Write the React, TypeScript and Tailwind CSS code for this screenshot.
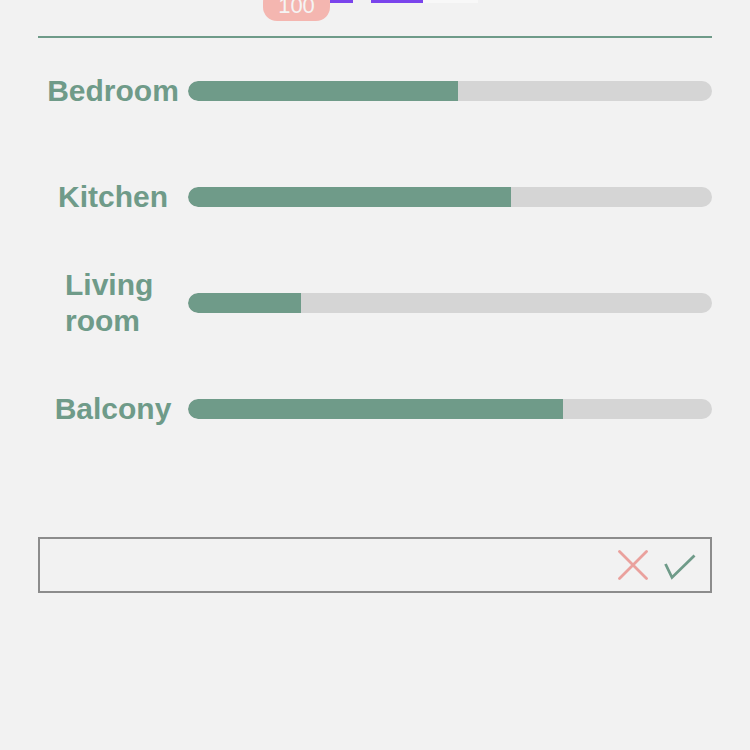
import React from "react";

const rooms = [
  { name: "Bedroom", pct: 270 / 524, labelClass: "" },
  { name: "Kitchen", pct: 323 / 524, labelClass: "" },
  { name: "Living room", pct: 113 / 524, labelClass: "w-[96px]" },
  { name: "Balcony", pct: 375 / 524, labelClass: "" },
];

export default function App() {
  return (
    <div
      className="w-[750px] h-[750px] bg-[#f2f2f2] overflow-hidden px-[38px]"
      style={{ fontFamily: '"Liberation Sans", Arial, sans-serif' }}
    >
      <div className="relative h-[36px]">
        <div className="absolute left-[225px] top-[-12px] w-[67px] h-[33px] rounded-[14px] bg-[#f4b6b0] flex items-center justify-center pt-[3px]">
          <span className="text-[22px] leading-none text-[#f4f4f4] font-light">100</span>
        </div>
        <div className="absolute left-[292px] top-0 w-[23px] h-[3px] bg-[#7a44ec]" />
        <div className="absolute left-[333px] top-0 w-[52px] h-[3px] bg-[#7a44ec]" />
        <div className="absolute left-[385px] top-0 w-[55px] h-[3px] bg-[#f8f8f8]" />
      </div>
      <div className="h-[2px] bg-[#6f9b89]" />
      <div className="flex flex-col">
        {rooms.map((r) => (
          <div key={r.name} className="h-[106px] flex items-center">
            <div className="w-[150px] shrink-0 flex justify-center">
              <div
                className={`text-[30px] leading-[36px] font-bold text-[#6f9b89] text-left ${r.labelClass}`}
              >
                {r.name}
              </div>
            </div>
            <div className="flex-1 h-[20px] rounded-full bg-[#d5d5d5] overflow-hidden">
              <div
                className="h-full bg-[#6f9b89] rounded-l-full"
                style={{ width: `${r.pct * 100}%` }}
              />
            </div>
          </div>
        ))}
      </div>
      <div className="mt-[75px] h-[56px] border-2 border-[#8c8c8c] flex items-center justify-end pr-[14px] gap-[16px]">
        <svg width="30" height="30" viewBox="0 0 30 30" fill="none">
          <path d="M1.5 1.5 L28.5 28.5 M28.5 1.5 L1.5 28.5" stroke="#eaa19d" strokeWidth="2.8" strokeLinecap="round" />
        </svg>
        <svg width="32" height="26" viewBox="0 0 32 26" fill="none" className="mt-[4px]">
          <path d="M1.5 10 L8 23.5 L30.5 1.5" stroke="#6f9b89" strokeWidth="2.8" strokeLinejoin="miter" />
        </svg>
      </div>
    </div>
  );
}
